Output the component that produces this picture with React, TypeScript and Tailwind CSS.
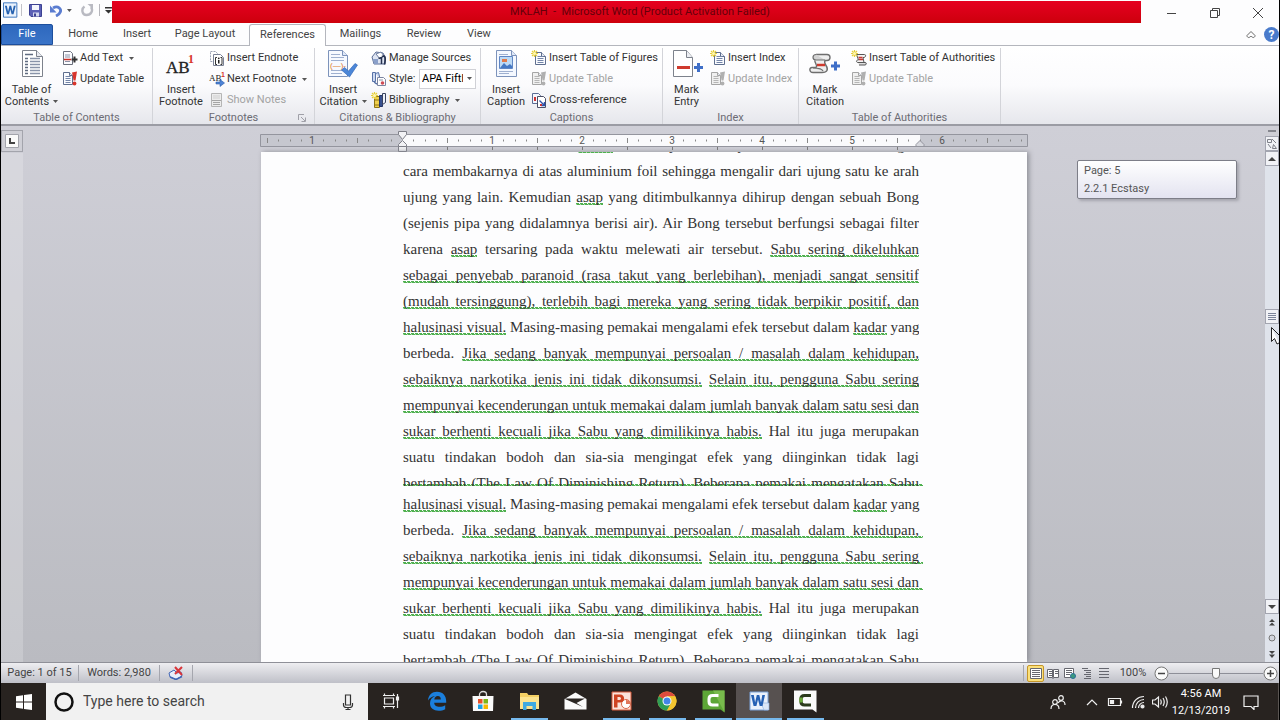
import React from 'react';

const UI_FONT = "font-['Roboto','Noto_Sans',sans-serif]";

type Seg = string | { t: string; run?: boolean };

const u = (t: string, run = false): Seg => ({ t, run });

const UPPER_LINES: Seg[][] = [
  ['Cara memakai kristal', u('shabu'), 'biasanya dihisap, serta dibakar dengan'],
  ['cara membakarnya di atas aluminium foil sehingga mengalir dari ujung satu ke arah'],
  ['ujung yang lain. Kemudian', u('asap'), 'yang ditimbulkannya dihirup dengan sebuah Bong'],
  ['(sejenis pipa yang didalamnya berisi air). Air Bong tersebut berfungsi sebagai filter'],
  ['karena', u('asap'), 'tersaring pada waktu melewati air tersebut.', u('Sabu sering dikeluhkan', true)],
  [u('sebagai penyebab paranoid (rasa takut yang berlebihan), menjadi sangat sensitif', true)],
  [u('(mudah tersinggung), terlebih bagi mereka yang sering tidak berpikir positif, dan', true)],
];

const SHARED_LINES: Seg[][] = [
  [u('halusinasi visual.'), 'Masing-masing pemakai mengalami efek tersebut dalam', u('kadar'), 'yang'],
  ['berbeda.', u('Jika sedang banyak mempunyai persoalan / masalah dalam kehidupan,', true)],
  [u('sebaiknya narkotika jenis ini tidak dikonsumsi.'), u('Selain itu, pengguna Sabu sering', true)],
  [u('mempunyai kecenderungan untuk memakai dalam jumlah banyak dalam satu sesi dan', true)],
  [u('sukar berhenti kecuali jika Sabu yang dimilikinya habis.'), 'Hal itu juga merupakan'],
  ['suatu tindakan bodoh dan sia-sia mengingat efek yang diinginkan tidak lagi'],
  ['bertambah (The Law Of Diminishing Return). Beberapa pemakai mengatakan Sabu'],
];

const SQUIGGLE =
  'bg-[linear-gradient(45deg,transparent_30%,#4fb04f_30%,#4fb04f_70%,transparent_70%),linear-gradient(#a9d8a9,#a9d8a9)] bg-[length:4px_2px,100%_1px] bg-[position:left_bottom,left_bottom] bg-repeat-x';

function DocLine({ segs }: { segs: Seg[] }) {
  return (
    <p className="h-[26px] whitespace-nowrap text-justify [text-align-last:justify]">
      {segs.map((s, i) => (
        <React.Fragment key={i}>
          {i > 0 && ' '}
          {typeof s === 'string' ? s : <span className={`${SQUIGGLE} ${s.run ? '-mr-1 pr-1' : ''}`}>{s.t}</span>}
        </React.Fragment>
      ))}
    </p>
  );
}

function Caret({ className = '' }: { className?: string }) {
  return (
    <svg className={`inline-block h-[3px] w-[5px] ${className}`} viewBox="0 0 5 3" fill="#555">
      <path d="M0 0h5L2.5 3z" />
    </svg>
  );
}

/* ---------- ribbon icons ---------- */

function Sheet({ x = 0, y = 0, w = 12, h = 14, dim = false }: { x?: number; y?: number; w?: number; h?: number; dim?: boolean }) {
  const stroke = dim ? '#a5a5a5' : '#5f6f8f';
  const f = Math.round(w / 3);
  const rows: number[] = [];
  for (let r = y + 4; r < y + h - 1; r += 2) rows.push(r);
  return (
    <g>
      <path d={`M${x + 0.5} ${y + 0.5}h${w - f - 1}l${f} ${f}v${h - f - 1}h${1 - w}z`} fill={dim ? '#f0f0f0' : '#fbfcff'} stroke={stroke} />
      <path d={`M${x + w - f - 0.5} ${y + 0.5}v${f}h${f}`} fill="#e6eaf3" stroke={stroke} />
      {rows.map((r) => (
        <path key={r} d={`M${x + 2.5} ${r + 0.5}h${w - 5}`} stroke={dim ? '#b5b5b5' : '#7385a8'} />
      ))}
    </g>
  );
}

function Sparkle() {
  return (
    <g stroke="#e6cf3c" strokeWidth="1.2">
      <path d="M3.5 0v7M0 3.5h7M1 1l5 5M6 1L1 6" />
      <circle cx="3.5" cy="3.5" r="1.5" fill="#fff7b0" stroke="none" />
    </g>
  );
}

const SMALL_ICONS: Record<string, React.ReactNode> = {
  addText: (
    <>
      <path d="M1.5 1.5h7l2 2v11h-9z" fill="#fbfcff" stroke="#6b6f7c" />
      <path d="M3 5h5M3 7h5M3 11.5h5" stroke="#8a91a5" />
      <path d="M2 9.5h7" stroke="#cc2e25" strokeWidth="1.5" />
      <path d="M12.5 6.5v6M9.5 9.5h6" stroke="#333" strokeWidth="2" />
    </>
  ),
  update: (
    <>
      <Sheet x={1} y={1} w={10} h={13} />
      <path d="M10 1.5l5-1-1.500 9h-2z" fill="#d8352c" />
      <circle cx="12.5" cy="12.5" r="1.900" fill="#d8352c" />
    </>
  ),
  updateDim: (
    <>
      <Sheet x={1} y={1} w={10} h={13} dim />
      <path d="M10 1.5l5-1-1.500 9h-2z" fill="#b0b0b0" />
      <circle cx="12.5" cy="12.5" r="1.900" fill="#b0b0b0" />
    </>
  ),
  endnote: (
    <>
      <path d="M1.5 1.5h5l2 2v8h-7z" fill="#fff" stroke="#9aa2b4" strokeDasharray="2 1" />
      <path d="M4.5 4.5h7l3 3v8h-10z" fill="#fff" stroke="#7a8296" />
      <path d="M8 7.5H6.5v7H8M11.5 7.5H13v7h-1.500" fill="none" stroke="#333" />
      <path d="M9.750 10v3.500" stroke="#222" strokeWidth="1.500" />
      <circle cx="9.750" cy="8.300" r="0.900" fill="#222" />
    </>
  ),
  nextFootnote: (
    <>
      <text x="0" y="10" fontSize="9" fontFamily="Liberation Serif, serif" fill="#222">AB</text>
      <text x="12" y="6" fontSize="7" fontWeight="700" fontFamily="Liberation Sans, sans-serif" fill="#d8352c">1</text>
      <path d="M7 11h4V8.500l4.500 3.500L11 15.500V13H7z" fill="#4d83d6" stroke="#2a5aa8" strokeWidth="0.600" />
    </>
  ),
  showNotes: (
    <>
      <path d="M2.500 1.500h10v13h-10z" fill="#ececec" stroke="#b5b5b5" />
      <path d="M4 4h7M4 6h7" stroke="#cfcfcf" />
      <path d="M3 8.500h9M4 10.500h7M4 12.500h7" stroke="#a5a5a5" />
    </>
  ),
  manage: (
    <>
      <path d="M1 7l4-5 7 1 2 4v7H3z" fill="#dfe5f2" stroke="#5b6d94" />
      <path d="M5 4l5-2 3 4-4 3z" fill="#fff" stroke="#6c7da0" />
      <path d="M2 9h5v5H3z" fill="#8ba0ca" />
      <path d="M7.500 8.500l3-1v6.500" fill="none" stroke="#27324f" strokeWidth="1.500" />
      <path d="M11 6.500c3-1.500 4 1 2.500 8" fill="none" stroke="#27324f" strokeWidth="1.700" />
    </>
  ),
  style: (
    <>
      <path d="M1.500 1.500h3v9h-3zM4.500 2.500l3-1 2 8" fill="#cfdaf0" stroke="#5872a8" />
      <path d="M3 10c1 3 3 3 4 3" fill="none" stroke="#5872a8" strokeWidth="1.400" />
      <path d="M6.500 6.500h6l2 2v6h-8z" fill="#fff" stroke="#7b84a0" />
      <path d="M8 9h4" stroke="#8a91a5" />
      <circle cx="11.500" cy="12" r="1.800" fill="#cf4b55" />
    </>
  ),
  bibliography: (
    <>
      <path d="M3.500 4.500h5v11h-5z" fill="#f1d04c" stroke="#8d7316" />
      <path d="M8.500 3.500h3v11h-3z" fill="#39518f" stroke="#253566" />
      <path d="M11.500 1.500h3v9l-3 2z" fill="#eef2fb" stroke="#39425f" />
      <path d="M4 8h4M4 13h4" stroke="#8d7316" />
      <Sparkle />
    </>
  ),
  newSheet: (
    <>
      <Sheet x={4} y={2} w={11} h={13} />
      <Sparkle />
    </>
  ),
  crossRef: (
    <>
      <path d="M1.500 1.500h6l2 2v8h-8z" fill="#f4f7fe" stroke="#5b6d94" />
      <path d="M6.500 4.500h6l2 2v9h-8z" fill="#fff" stroke="#4b4f66" />
      <path d="M3 5h2v4H3z" fill="#c33" />
      <path d="M8.500 8.500l5 5M13.500 10v3.500H10" fill="none" stroke="#2c51a8" strokeWidth="1.400" />
      <path d="M9 12h2v2H9z" fill="#c33" />
    </>
  ),
  authorities: (
    <>
      <path d="M5.500 4.500h8c2 0 1 3-.5 3h-1l1 5h-6c-2 0-2-2.500 0-2.500h.5z" fill="#f3f3f3" stroke="#555" />
      <path d="M7 12.500h7c2 0 1.500 2.500 0 2.500H8" fill="#ddd" stroke="#555" />
      <path d="M7.500 7.500h4M8 9.500h4" stroke="#c93a34" strokeWidth="1.300" />
      <Sparkle />
    </>
  ),
};

function SmallIcon({ name }: { name: string }) {
  return (
    <svg className="h-4 w-4 shrink-0" viewBox="0 0 16 16" fill="none">
      {SMALL_ICONS[name]}
    </svg>
  );
}

const LARGE_ICONS: Record<string, React.ReactNode> = {
  toc: (
    <>
      <path d="M6.500 2.500h14l6 6v20h-20z" fill="#fff" stroke="#7d828c" />
      <path d="M20.500 2.500v6h6" fill="#e8eaf0" stroke="#7d828c" />
      <path d="M9 6.500h8M9 10.500h3M9 13.500h3M9 16.500h3M9 19.500h3M9 22.500h3M9 25.500h3" stroke="#5f6b80" strokeWidth="1.300" />
      <path d="M14 10.500h10M14 13.500h10M14 16.500h10M14 19.500h10M14 22.500h10M14 25.500h10" stroke="#8893a8" strokeWidth="1.300" />
    </>
  ),
  footnote: (
    <>
      <text x="1" y="25" fontSize="17" fontFamily="Liberation Serif, serif" fill="#222" stroke="#222" strokeWidth="0.300">AB</text>
      <text x="23" y="15" fontSize="12" fontWeight="700" fontFamily="Liberation Serif, serif" fill="#d8352c">1</text>
    </>
  ),
  citation: (
    <>
      <path d="M1.500 2.500h14l5 5v21h-19z" fill="#f6f9ff" stroke="#7d93bb" />
      <path d="M15.500 2.500v5h5" fill="#dfe8f8" stroke="#7d93bb" />
      <path d="M4 6.500h9M4 9.500h13M4 12.500h13M4 22.500h13M4 25.500h11" stroke="#9fb0d0" />
      <text x="3" y="20" fontSize="8" fontFamily="Liberation Sans, sans-serif" fill="#e07a2a">(—)-</text>
      <path d="M14.500 22l3-2.500 4 3.500 6.500-7.500 2.500 1.500-8 12z" fill="#4b86d8" stroke="#2e62b0" strokeWidth="0.600" />
    </>
  ),
  caption: (
    <>
      <path d="M6.500 2.500h15l5 5v21h-20z" fill="#f4f8ff" stroke="#7d93bb" />
      <path d="M21.500 2.500v5h5" fill="#dfe8f8" stroke="#7d93bb" />
      <path d="M9 6.500h9M9 23.500h14M9 25.500h10" stroke="#9fb0d0" />
      <path d="M9.500 8.500h13v12h-13z" fill="#bcd9f5" stroke="#5f86c4" />
      <path d="M10 20l4-5 3 3 3-2 2 2v2z" fill="#4478c4" />
      <path d="M12 11h5v3h-5z" fill="#e07a4a" />
    </>
  ),
  entry: (
    <>
      <path d="M2.500 2.500h13l6 7v19h-19z" fill="#fff" stroke="#7d828c" />
      <path d="M15.500 2.500v7h6" fill="#eceef3" stroke="#7d828c" />
      <path d="M6 19.500h13" stroke="#cf3a2e" strokeWidth="3" />
      <path d="M27.500 15v9M23 19.500h9" stroke="#3f6fc8" strokeWidth="3" />
    </>
  ),
  markCitation: (
    <>
      <path d="M7 6.500h11c4 0 4 6 0 6h-2c-2 4 4 6 2 10-1 2-3 2-5 2H4c-4 0-4-5-1-5h4c2-3-2-5-1-7" fill="#efefef" stroke="#6e6e6e" strokeWidth="1.400" />
      <path d="M7 6.500c-4 0-4 5.500 0 5.500h9M4 20c4 0 9 0 10 3" fill="#d2d2d2" stroke="#6e6e6e" strokeWidth="1.200" />
      <path d="M8 17h8" stroke="#cf3a2e" strokeWidth="2.500" />
      <path d="M26.500 13.500v9M22 18h9" stroke="#3f6fc8" strokeWidth="3" />
    </>
  ),
};

/* ---------- ribbon ---------- */

function LargeButton({ icon, lines, menu, width }: { icon: string; lines: [string, string]; menu?: boolean; width: string }) {
  return (
    <button type="button" className={`flex shrink-0 flex-col items-center ${width}`}>
      <svg className="h-8 w-8" viewBox="0 0 32 32" fill="none">
        {LARGE_ICONS[icon]}
      </svg>
      <span className="mt-1 text-center leading-[12px] whitespace-nowrap">
        {lines[0]}
        <br />
        {lines[1]}
        {menu && <Caret className="mb-0.5 ml-1" />}
      </span>
    </button>
  );
}

function SmallButton({ icon, label, menu, disabled }: { icon: string; label: string; menu?: boolean; disabled?: boolean }) {
  return (
    <button type="button" disabled={disabled} className="flex h-5 items-center gap-0.5 whitespace-nowrap disabled:text-[#a3a3a3]">
      <SmallIcon name={icon} />
      {label}
      {menu && <Caret className="ml-1" />}
    </button>
  );
}

function Group({ title, width, large, children, launcher }: { title: string; width: string; large: React.ReactNode; children: React.ReactNode; launcher?: boolean }) {
  return (
    <section aria-label={title} className={`flex shrink-0 flex-col border-r border-[#d3d4d9] ${width}`}>
      <div className="flex h-16 items-start">
        {large}
        <div className="flex flex-col items-start gap-px">{children}</div>
      </div>
      <div className="flex items-center text-[#6c6c74]">
        <span className="flex-1 text-center leading-[13px]">{title}</span>
        {launcher && (
          <button type="button" aria-label={`${title} options`} className="-ml-4 w-4">
            <svg className="h-2 w-2" viewBox="0 0 8 8" fill="none" stroke="#a0a0a8">
              <path d="M.5 6V.5H6M3 3l4 4M7.500 3.500v4h-4" />
            </svg>
          </button>
        )}
      </div>
    </section>
  );
}

const TABS = [
  { name: 'Home', cls: 'w-[60px]' },
  { name: 'Insert', cls: 'w-[48px]' },
  { name: 'Page Layout', cls: 'w-[88px]' },
  { name: 'References', cls: 'w-[77px]' },
  { name: 'Mailings', cls: 'w-[69px]' },
  { name: 'Review', cls: 'w-[58px]' },
  { name: 'View', cls: 'w-[52px]' },
];

function TitleBar() {
  return (
    <header className="flex h-6 bg-[#fdfdfe]">
      <div className="flex w-[111px] items-center pb-1 pl-0.5">
        <svg className="h-4 w-4" viewBox="0 0 16 16">
          <path d="M.5.5h14v15H.5z" fill="#eaf2fc" stroke="#3b74bd" />
          <path d="M2 3.500h2l1.300 6L6.800 3.500h1.700l1.500 6 1.300-6h2L11 12.500H9L7.600 7.300 6.200 12.500h-2z" fill="#2762b0" />
        </svg>
        <span className="mx-[3px] h-3 w-px bg-[#c2c2c8]" />
        <button type="button" aria-label="Save" className="ml-1">
          <svg className="h-[13px] w-[13px]" viewBox="0 0 13 13">
            <path d="M.5.5h12v12H2L.5 11z" fill="#5a5fb5" stroke="#3c4192" />
            <path d="M3 1h7v5H3z" fill="#f4f6fd" />
            <path d="M4 8.500h6v4H4z" fill="#d3d7ee" />
            <path d="M5 9.500h2v3H5z" fill="#3c4192" />
          </svg>
        </button>
        <button type="button" aria-label="Undo" className="ml-2">
          <svg className="h-[13px] w-3" viewBox="0 0 12 13" fill="none">
            <path d="M3 4c5-3 9 1 7 4.500C9.500 10 8 11 6 12" stroke="#5a7cd0" strokeWidth="2.800" />
            <path d="M0 1.500v7h6.500z" fill="#5a7cd0" />
          </svg>
        </button>
        <Caret className="ml-[5px]" />
        <button type="button" aria-label="Repeat" className="ml-[9px]">
          <svg className="h-[13px] w-[13px]" viewBox="0 0 13 13" fill="none">
            <path d="M3.500 2.500C0 5 1 11 5.500 11s7-4.500 4.500-8" stroke="#b9bac2" strokeWidth="2.400" />
            <path d="M6.500 0h5.500v5z" fill="#b9bac2" />
          </svg>
        </button>
        <span className="mx-[5px] h-3 w-px bg-[#b5b5bb]" />
        <button type="button" aria-label="Customize Quick Access Toolbar">
          <svg className="h-[7px] w-[7px]" viewBox="0 0 7 7" fill="#333">
            <path d="M0 0h7v1.500H0zM0 3h7L3.500 6.500z" />
          </svg>
        </button>
      </div>
      <div className="mt-px mb-px flex flex-1 items-center justify-center bg-linear-to-b from-[#e60020] to-[#cd000b] pl-[27px]">
        <h1 className="text-[11px] whitespace-pre text-[#64000a]">MKLAH  -  Microsoft Word (Product Activation Failed)</h1>
      </div>
      <div className="flex w-[138px] items-center justify-around pt-0.5 pl-[9px]">
        <button type="button" aria-label="Minimize">
          <svg className="h-2.5 w-2.5" viewBox="0 0 10 10" stroke="#444">
            <path d="M0 5.500h9" />
          </svg>
        </button>
        <button type="button" aria-label="Restore">
          <svg className="h-2.5 w-2.5" viewBox="0 0 10 10" fill="none" stroke="#444">
            <path d="M.5 2.500h7v7h-7zM2.500 2.500v-2h7v7h-2" />
          </svg>
        </button>
        <button type="button" aria-label="Close">
          <svg className="h-2.5 w-2.5" viewBox="0 0 10 10" stroke="#444">
            <path d="M0 0l10 10M10 0L0 10" />
          </svg>
        </button>
      </div>
    </header>
  );
}

function TabBar() {
  return (
    <nav className="flex h-[22px] items-stretch border-b border-[#b4b6bd] bg-[#fdfdfe] text-[11px] text-[#444]">
      <button type="button" className="w-[52px] rounded-t-[2px] border border-[#1d4f9d] bg-linear-to-b from-[#2e68bd] to-[#3a74c8] text-white">
        File
      </button>
      {TABS.map((t) => (
        <button
          key={t.name}
          type="button"
          className={`${t.cls} whitespace-nowrap ${t.name === 'References' ? '-mb-px rounded-t-[3px] border border-b-0 border-[#b4b6bd] bg-white' : ''}`}
        >
          {t.name}
        </button>
      ))}
      <div className="ml-auto flex items-center gap-2">
        <button type="button" aria-label="Minimize the Ribbon">
          <svg className="h-2 w-2.5" viewBox="0 0 10 8" fill="none" stroke="#666">
            <path d="M1 4.500l4-4 4 4c0 2-2 3-4 .5-2 2.500-4 1.500-4-.5z" />
          </svg>
        </button>
        <button type="button" aria-label="Help" className="flex h-[15px] w-[15px] items-center justify-center rounded-full bg-[#4a7bcb] text-[12px] font-bold text-white">
          ?
        </button>
      </div>
    </nav>
  );
}

function Ribbon() {
  return (
    <div className="flex h-20 border-b-2 border-[#9b9ca4] bg-linear-to-b from-white via-[#fbfbfd] to-[#e6e7ec] pt-0.5 text-[11px] text-[#333]">
      <Group title="Table of Contents" width="w-[152px]" large={<LargeButton icon="toc" lines={['Table of', 'Contents']} menu width="w-[61px]" />}>
        <SmallButton icon="addText" label="Add Text" menu />
        <SmallButton icon="update" label="Update Table" />
      </Group>
      <Group title="Footnotes" width="w-[162px]" launcher large={<LargeButton icon="footnote" lines={['Insert', 'Footnote']} width="w-[56px]" />}>
        <SmallButton icon="endnote" label="Insert Endnote" />
        <SmallButton icon="nextFootnote" label="Next Footnote" menu />
        <SmallButton icon="showNotes" label="Show Notes" disabled />
      </Group>
      <Group title="Citations & Bibliography" width="w-[166px]" large={<LargeButton icon="citation" lines={['Insert', 'Citation']} menu width="w-[56px]" />}>
        <SmallButton icon="manage" label="Manage Sources" />
        <div className="flex h-5 items-center gap-0.5">
          <SmallIcon name="style" />
          <label htmlFor="cite-style" className="w-7">Style:</label>
          <div className="relative">
            <select id="cite-style" className="h-5 w-[57px] appearance-none overflow-hidden border border-[#d0d1d6] bg-white pr-3 pl-0.5 text-[11px] whitespace-nowrap text-black">
              <option>APA Fifth</option>
            </select>
            <Caret className="pointer-events-none absolute top-2 right-1" />
          </div>
        </div>
        <SmallButton icon="bibliography" label="Bibliography" menu />
      </Group>
      <Group title="Captions" width="w-[182px]" large={<LargeButton icon="caption" lines={['Insert', 'Caption']} width="w-[50px]" />}>
        <SmallButton icon="newSheet" label="Insert Table of Figures" />
        <SmallButton icon="updateDim" label="Update Table" disabled />
        <SmallButton icon="crossRef" label="Cross-reference" />
      </Group>
      <Group title="Index" width="w-[136px]" large={<LargeButton icon="entry" lines={['Mark', 'Entry']} width="w-[47px]" />}>
        <SmallButton icon="newSheet" label="Insert Index" />
        <SmallButton icon="updateDim" label="Update Index" disabled />
      </Group>
      <Group title="Table of Authorities" width="w-[202px]" large={<LargeButton icon="markCitation" lines={['Mark', 'Citation']} width="w-[52px]" />}>
        <SmallButton icon="authorities" label="Insert Table of Authorities" />
        <SmallButton icon="updateDim" label="Update Table" disabled />
      </Group>
    </div>
  );
}

/* ---------- work area ---------- */

// One inch is 90 units; zero sits at 142 from the left end.
function Ruler() {
  const ticks = [];
  for (let i = -12; i <= 55; i++) {
    const x = Math.round(142 + i * 11.25);
    if (i % 8 === 0) {
      if (i !== 0) {
        ticks.push(
          <text key={i} x={x} y="10" fontSize="10" textAnchor="middle" fill="#555" fontFamily="Roboto, sans-serif">
            {Math.abs(i / 8)}
          </text>,
        );
      }
    } else if (i % 4 === 0) {
      ticks.push(<path key={i} d={`M${x + 0.5} 4v5`} stroke="#888" />);
    } else {
      ticks.push(<path key={i} d={`M${x + 0.5} 5.5v2`} stroke="#888" />);
    }
  }
  return (
    <svg className="mx-auto h-[18px] w-[768px] overflow-visible" viewBox="0 0 768 18" fill="none">
      <path d="M.5.5h767v12H.5z" fill="#c6c7cf" stroke="#94959e" />
      <path d="M142 1h518v11H142z" fill="#fafafc" />
      {ticks}
      {Array.from({ length: 11 }, (_, i) => (
        <path key={i} d={`M${187.5 + i * 45} 13v3`} stroke="#777" />
      ))}
      <path d="M138.500-2.500h8v3l-4 5-4-5z" fill="#f2f2f5" stroke="#7e7f88" />
      <path d="M142.500 6.500l4 4v2h-8v-2z" fill="#f2f2f5" stroke="#7e7f88" />
      <path d="M138.500 12.500h8v5h-8z" fill="#f2f2f5" stroke="#7e7f88" />
      <path d="M660 6.500l4 4v2h-8v-2z" fill="#d8d9df" stroke="#94959e" />
    </svg>
  );
}

function ScrollBar() {
  const btn = 'flex h-[15px] w-full shrink-0 items-center justify-center border border-[#a3a5b0] bg-[#f1f2f6]';
  return (
    <div className="flex w-[14px] shrink-0 flex-col items-center bg-[#dfe3eb]">
      <div className="flex h-[25px] w-full flex-col items-center bg-[#cfcfd6] pt-1">
        <span className="mb-1 h-0.5 w-2 bg-[#85868e]" />
        <button type="button" aria-label="View Ruler" className={btn}>
          <svg className="h-3 w-3" viewBox="0 0 12 12" fill="none" stroke="#7e8088">
            <path d="M1.500 1.500h4v3h-4zM6 1l4 4M2 6l3 4M7.500 6.500l3 4h-4z" />
          </svg>
        </button>
      </div>
      <button type="button" aria-label="Scroll up" className={btn}>
        <svg className="h-1 w-2" viewBox="0 0 8 4" fill="#444"><path d="M0 4h8L4 0z" /></svg>
      </button>
      <div className="grow-[143]" />
      <div className={btn}>
        <svg className="h-[7px] w-2" viewBox="0 0 8 7" stroke="#7d859a"><path d="M0 .5h8M0 2.500h8M0 4.500h8M0 6.500h8" /></svg>
      </div>
      <div className="grow-[274]" />
      <button type="button" aria-label="Scroll down" className={btn}>
        <svg className="h-1 w-2" viewBox="0 0 8 4" fill="#444"><path d="M0 0h8L4 4z" /></svg>
      </button>
      <button type="button" aria-label="Previous Page" className="flex h-4 items-center">
        <svg className="h-[7px] w-1.5" viewBox="0 0 6 7" fill="#444"><path d="M0 3h6L3 0zM0 6.500h6L3 3.500z" /></svg>
      </button>
      <button type="button" aria-label="Select Browse Object" className="flex h-4 items-center">
        <svg className="h-2 w-2" viewBox="0 0 8 8" fill="#d2d5dd" stroke="#777"><circle cx="4" cy="4" r="3" /></svg>
      </button>
      <button type="button" aria-label="Next Page" className="flex h-4 items-center">
        <svg className="h-[7px] w-1.5" viewBox="0 0 6 7" fill="#444"><path d="M0 0h6L3 3zM0 3.500h6L3 7z" /></svg>
      </button>
    </div>
  );
}

function WorkArea() {
  return (
    <main className="relative flex min-h-0 flex-1 overflow-hidden bg-linear-to-b from-[#cfcfd7] to-[#babbc1]">
      <div className="w-[22px] shrink-0 pt-1">
        <button type="button" aria-label="Tab selector" className="flex h-[22px] w-[22px] items-center justify-center border border-[#a3a4ac] bg-[#cfcfd6]">
          <svg className="h-[14px] w-[14px]" viewBox="0 0 14 14" fill="#fafafa">
            <path d="M.5.5h13v13H.5z" stroke="#a3a4ac" />
            <path d="M5 4v5h5" fill="none" stroke="#444" strokeWidth="2" />
          </svg>
        </button>
        <div className="mt-px h-full bg-white/20" />
      </div>
      <div className="flex min-w-0 flex-1 flex-col">
        <div className="h-[26px] shrink-0 pt-2">
          <Ruler />
        </div>
        <article className="mx-auto min-h-0 w-[766px] flex-1 overflow-hidden bg-[#fdfdfe] pr-[108px] pl-[142px] font-['Liberation_Serif',serif] text-[15px] leading-[26px] text-[#333] shadow-[2px_0_5px_#8d8e96]">
          <div className="h-[334px] overflow-hidden">
            <div className="-mt-5">
              {UPPER_LINES.concat(SHARED_LINES).map((l, i) => (
                <DocLine key={i} segs={l} />
              ))}
            </div>
          </div>
          <div className={`-mt-0.5 -mr-1 h-0.5 ${SQUIGGLE}`} />
          <div className="mt-[5px]">
            {SHARED_LINES.map((l, i) => (
              <DocLine key={i} segs={l} />
            ))}
          </div>
        </article>
      </div>
      <ScrollBar />

      {/* scroll position tip */}
      <div role="tooltip" className="absolute top-[34px] right-[42px] h-[39px] w-[160px] rounded-[2px] border border-[#7d7e88] bg-linear-to-b from-white to-[#e3e3f0] px-1.5 pt-px text-[11px] leading-[18px] text-[#555] shadow-[2px_2px_3px_#a5a5ad]">
        <p>Page: 5</p>
        <p>2.2.1 Ecstasy</p>
      </div>
      <svg className="absolute top-[201px] right-0 h-[18px] w-2" viewBox="0 0 8 18">
        <path d="M.5.500v14l3-3 2.500 5.500 2-1" fill="#fff" stroke="#222" />
        <path d="M.5.500l10 10" stroke="#222" />
      </svg>
    </main>
  );
}

/* ---------- status bar ---------- */

function ViewButton({ label, active, children }: { label: string; active?: boolean; children: React.ReactNode }) {
  return (
    <button type="button" aria-label={label} className={`flex h-[17px] w-[17px] items-center justify-center rounded-[2px] ${active ? 'border border-[#c4962a] bg-[#fbe07a]' : ''}`}>
      <svg className="h-[11px] w-3 shrink-0" viewBox="0 0 12 11" fill="none" stroke="#66676f">
        {children}
      </svg>
    </button>
  );
}

function StatusBar() {
  return (
    <footer className="flex h-[21px] items-center border-t border-[#8f9098] bg-linear-to-b from-[#eeeef1] to-[#bfc0c8] text-[11px] text-[#444]">
      <button type="button" className="w-[77px] text-center whitespace-nowrap">Page: 1 of 15</button>
      <span className="h-4 w-px bg-[#a5a6ae]" />
      <button type="button" className="w-[80px] text-center whitespace-nowrap">Words: 2,980</button>
      <span className="h-4 w-px bg-[#a5a6ae]" />
      <button type="button" aria-label="Proofing errors" className="flex w-8 justify-center">
        <svg className="h-[14px] w-4" viewBox="0 0 16 14">
          <path d="M1 7l5-3 3 3 4-1 1 4-6 3.500L2 11z" fill="#e8eefb" stroke="#4166b5" />
          <path d="M2 11l6 2.500 6-3" stroke="#4166b5" strokeWidth="1.500" fill="none" />
          <path d="M7 1l7 8M14 1L7 8" stroke="#d8353a" strokeWidth="2" />
        </svg>
      </button>
      <span className="h-4 w-px bg-[#a5a6ae]" />
      <div className="ml-auto flex items-center">
        <span className="mr-[3px] h-4 w-px bg-[#a5a6ae]" />
        <div className="flex">
          <ViewButton label="Print Layout" active>
            <path d="M.5.5h11v10H.5z" fill="#fff" />
            <path d="M2 2.500h8M2 4.500h8M2 6.500h8M2 8.500h8" />
          </ViewButton>
          <ViewButton label="Full Screen Reading">
            <path d="M.5 1.500h5v8h-5zM6.500 1.500h5v8h-5z" fill="#fff" />
            <path d="M2 3.500h3M2 5.500h3M2 7.500h3M8 3.500h3M8 5.500h3M6 10v1" />
          </ViewButton>
          <ViewButton label="Web Layout">
            <path d="M.5.5h9v9h-9z" fill="#fff" />
            <path d="M2 2.500h6M2 4.500h6M2 6.500h4" />
            <circle cx="9" cy="8" r="2.500" fill="#3c9a7c" stroke="#2c6f9b" />
          </ViewButton>
          <ViewButton label="Outline">
            <path d="M1 .5h6M3 2.500h7M5 4.500h5M3 6.500h7M5 8.500h5M3 10.500h7" />
          </ViewButton>
          <ViewButton label="Draft">
            <path d="M1 .5h10M1 3.500h10M1 6.500h10M1 9.500h10" />
          </ViewButton>
        </div>
        <button type="button" className="w-[42px] text-center">100%</button>
        <button type="button" aria-label="Zoom Out">
          <svg className="h-[15px] w-[15px]" viewBox="0 0 15 15" fill="#fafafa" stroke="#777">
            <circle cx="7.500" cy="7.500" r="6.500" />
            <path d="M4 7.500h7" stroke="#444" strokeWidth="1.500" />
          </svg>
        </button>
        <input
          type="range"
          aria-label="Zoom"
          min={0}
          max={100}
          defaultValue={50}
          className="h-[13px] w-[94px] appearance-none bg-[linear-gradient(#8e8f98,#8e8f98)] bg-[length:100%_1px] bg-center bg-no-repeat [&::-webkit-slider-thumb]:h-[11px] [&::-webkit-slider-thumb]:w-2 [&::-webkit-slider-thumb]:appearance-none [&::-webkit-slider-thumb]:rounded-b-[4px] [&::-webkit-slider-thumb]:border [&::-webkit-slider-thumb]:border-[#777] [&::-webkit-slider-thumb]:bg-[#fafafa]"
        />
        <button type="button" aria-label="Zoom In" className="mr-px">
          <svg className="h-[15px] w-[15px]" viewBox="0 0 15 15" fill="#fafafa" stroke="#777">
            <circle cx="7.500" cy="7.500" r="6.500" />
            <path d="M4 7.500h7M7.500 4v7" stroke="#444" strokeWidth="1.500" />
          </svg>
        </button>
      </div>
    </footer>
  );
}

/* ---------- taskbar ---------- */

const TASKS: { name: string; open?: boolean; active?: boolean; icon: React.ReactNode }[] = [
  {
    name: 'Task View',
    icon: (
      <g fill="none" stroke="#eee" strokeWidth="1.200">
        <path d="M3.500 7h9v6H3.500zM2 4.500h12M2 15.500h12M3.500 2.500v2M12.500 2.500v2M3.500 15.500v2M12.500 15.500v2M16.500 3v14" />
        <path d="M15.500 6h2v3h-2z" fill="#eee" />
      </g>
    ),
  },
  {
    name: 'Microsoft Edge',
    icon: <path d="M1 9.500C1.500 4 5 .8 10 .8c6 0 9.200 4 9.200 9.700v1.300H7.200c.2 3 2.500 4 5.300 4 2.300 0 4-.6 5.700-1.600v4c-2 1.200-4.200 1.600-6.500 1.600C6.500 19.800 3 17 3 12.300c0-3.500 2-6 5-7.300-3 .3-5.500 2-7 4.500zm6.300-1h6.500c0-2-.8-3.500-3-3.500-2 0-3.200 1.500-3.500 3.500z" fill="#1b7fdc" />,
  },
  {
    name: 'Microsoft Store',
    icon: (
      <>
        <path d="M6.500 6V3.500a3.500 3 0 017 0V6" fill="none" stroke="#ddd" strokeWidth="1.300" />
        <path d="M-.5 5h21L20 20H0z" fill="#fafafa" />
        <path d="M5 8h4.500v4.500H5z" fill="#e8502a" />
        <path d="M10.500 8H15v4.500h-4.500z" fill="#7cb518" />
        <path d="M5 13.500h4.500V18H5z" fill="#1ea0e4" />
        <path d="M10.500 13.500H15V18h-4.500z" fill="#f7b800" />
      </>
    ),
  },
  {
    name: 'File Explorer',
    open: true,
    icon: (
      <>
        <path d="M1 2h7l1.500 2H20v14H1z" fill="#f3cf63" />
        <path d="M1 6h19v12H1z" fill="#fbe38f" />
        <path d="M4 11h13v8h-3.500v-4h-6v4H4z" fill="#3fa9e0" />
      </>
    ),
  },
  {
    name: 'Mail',
    icon: (
      <>
        <path d="M-.5 8L10.500 1.500 21.500 8v10.500h-22z" fill="#fafafa" />
        <path d="M0 7.500h20l-8.500 4.500 6.500 4-18-8z" fill="#2a2522" />
      </>
    ),
  },
  {
    name: 'PowerPoint',
    open: true,
    icon: (
      <>
        <path d="M1 1h19v18H1z" fill="#fbe3da" stroke="#d65a3a" />
        <circle cx="15" cy="13" r="4.500" fill="#fff" stroke="#d9674b" />
        <path d="M15 9v4h4.500A4.500 4.500 0 0015 9z" fill="#e0775c" />
        <path d="M3 3.500h6c5.500 0 5.500 8 0 8H6.500v5H3zm3.500 2.500v3H8.500c2 0 2-3 0-3z" fill="#cf4422" fillRule="evenodd" />
      </>
    ),
  },
  {
    name: 'Google Chrome',
    open: true,
    icon: (
      <>
        <circle cx="10" cy="10" r="9.500" fill="#f3c530" />
        <path d="M10 10L1.800 5.200A9.500 9.500 0 0118.200 5.200H10z" fill="#dd4b3e" />
        <path d="M1.800 5.200A9.500 9.500 0 0010 19.500l4-7.200-4-2z" fill="#2f9e56" />
        <path d="M18.200 5.200H10v5l4 2-4 7.300A9.500 9.500 0 0018.200 5.200z" fill="#f3c530" />
        <circle cx="10" cy="10" r="4.500" fill="#fff" />
        <circle cx="10" cy="10" r="3.500" fill="#4285e8" />
      </>
    ),
  },
  {
    name: 'Camtasia',
    open: true,
    icon: (
      <>
        <path d="M-.5-.5h22v22l-4-3H-.5z" fill="#5da637" />
        <path d="M10-.5h11.500v22z" fill="#78bb4c" />
        <path d="M15.500 4.500H9.500q-3.500 0-3.500 3.500v2.500Q6 14 9.500 14h6" fill="none" stroke="#fff" strokeWidth="3" />
      </>
    ),
  },
  {
    name: 'Microsoft Word',
    open: true,
    active: true,
    icon: (
      <>
        <path d="M1 1h18v18H1z" fill="#e9f0fb" stroke="#7ba2d8" />
        <path d="M12 12h8v7h-5z" fill="#dbe6f7" stroke="#8fb0de" strokeWidth="0.600" />
        <path d="M2 4h2.800l1.300 7.500L7.800 4h2.500l1.700 7.500L13.300 4H16l-2.500 11h-2.800L9 8.500 7.400 15H4.600z" fill="#2560b4" />
      </>
    ),
  },
  {
    name: 'Camtasia Recorder',
    open: true,
    icon: (
      <>
        <path d="M-1-.5h22.500v22l-4-3H-1z" fill="#fafafa" />
        <path d="M16 4.500H9.500Q6 4.500 6 8v2.500Q6 14 9.500 14H16" fill="none" stroke="#2b3a1c" strokeWidth="3.200" />
        <path d="M6 6.500v5" stroke="#6aaa38" strokeWidth="3.200" />
      </>
    ),
  },
];

function TrayIcon({ label, cls, children }: { label: string; cls: string; children: React.ReactNode }) {
  return (
    <button type="button" aria-label={label} className={`flex justify-center ${cls}`}>
      <svg className="h-4 w-4" viewBox="0 0 16 16" fill="none" stroke="#f0f0f0" strokeWidth="1.200">
        {children}
      </svg>
    </button>
  );
}

function Taskbar() {
  return (
    <div className="flex h-[37px] items-stretch bg-[#282320] text-white">
      <button type="button" aria-label="Start" className="flex w-[45px] items-center justify-center">
        <svg className="h-4 w-4" viewBox="0 0 16 16" fill="#fff">
          <path d="M0 2.200L7 1.200v6.300H0zM8 1l8-1v7.500H8zM0 8.500h7v6.300l-7-1zM8 8.500h8V16l-8-1z" />
        </svg>
      </button>
      <div className="flex w-[322px] items-center bg-[#f1f1f1] pr-3 pl-2">
        <svg className="h-5 w-5" viewBox="0 0 20 20" fill="none">
          <circle cx="10" cy="10" r="8.500" stroke="#111" strokeWidth="2.500" />
        </svg>
        <input type="text" aria-label="Search" placeholder="Type here to search" className="ml-[9px] min-w-0 flex-1 bg-transparent text-[14px] outline-none placeholder:text-[#444]" />
        <svg className="h-4 w-4" viewBox="0 0 16 16" fill="none" stroke="#333" strokeWidth="1.200">
          <path d="M5.500 1h5v10h-5zM3.500 9v2q0 2.500 3 2.500h3q3 0 3-2.500V9M8 13.500V16M5.500 15.500h5" />
        </svg>
      </div>
      {TASKS.map((t) => (
        <button key={t.name} type="button" aria-label={t.name} className={`flex w-[46px] flex-col items-center ${t.active ? 'bg-[#575150]' : ''}`}>
          <span className="flex flex-1 items-center">
            <svg className="h-5 w-5 overflow-visible" viewBox="0 0 20 20">
              {t.icon}
            </svg>
          </span>
          <span className={`h-0.5 ${t.active ? 'w-full' : 'w-[37px]'} ${t.open ? 'bg-[#76b9ed]' : ''}`} />
        </button>
      ))}
      <div className="ml-auto flex items-center">
        <TrayIcon label="People" cls="w-[44px]">
          <circle cx="5" cy="8" r="2.300" />
          <circle cx="11" cy="4" r="2.300" />
          <path d="M1 15c0-6 8-6 8 0M8 9c2-3 7-3 7 2" />
        </TrayIcon>
        <TrayIcon label="Show hidden icons" cls="w-[23px]">
          <path d="M3 11l5-5 5 5" />
        </TrayIcon>
        <TrayIcon label="Battery" cls="w-[23px]">
          <path d="M1.500 4.500h12v7h-12zM14.500 6.500v3" />
          <path d="M3.500 6.500h3v3h-3z" fill="#f0f0f0" />
        </TrayIcon>
        <TrayIcon label="Network" cls="w-[23px]">
          <path d="M2.500 14C2.500 7 8 2.500 14 2.500M5.500 14c0-5 4-8.500 8.500-8.500M8.500 14c0-3 2.500-5.500 5.500-5.500" />
          <circle cx="12.500" cy="12.500" r="1.500" fill="#f0f0f0" />
        </TrayIcon>
        <TrayIcon label="Volume" cls="w-[22px]">
          <path d="M.5 6h2.500l3.500-3v10L3 10H.5zM8.500 5.500q1.500 2.500 0 5M11 4q2.500 4 0 8M13.500 2.500q3.500 5.500 0 11" />
        </TrayIcon>
        <div className="w-[60px] text-center text-[11px] leading-[17px]">
          <p>4:56 AM</p>
          <p>12/13/2019</p>
        </div>
        <TrayIcon label="Notifications" cls="mr-[7px] w-10">
          <path d="M1 2h14v10.500H11v3l-3-3H1z" />
        </TrayIcon>
        <span className="h-[37px] w-px bg-[#5a5552]" />
      </div>
    </div>
  );
}

export default function App() {
  return (
    <div className={`flex h-screen w-full flex-col overflow-hidden border-x border-black bg-[#cfcfd6] ${UI_FONT}`}>
      <TitleBar />
      <TabBar />
      <Ribbon />
      <WorkArea />
      <StatusBar />
      <Taskbar />
    </div>
  );
}
